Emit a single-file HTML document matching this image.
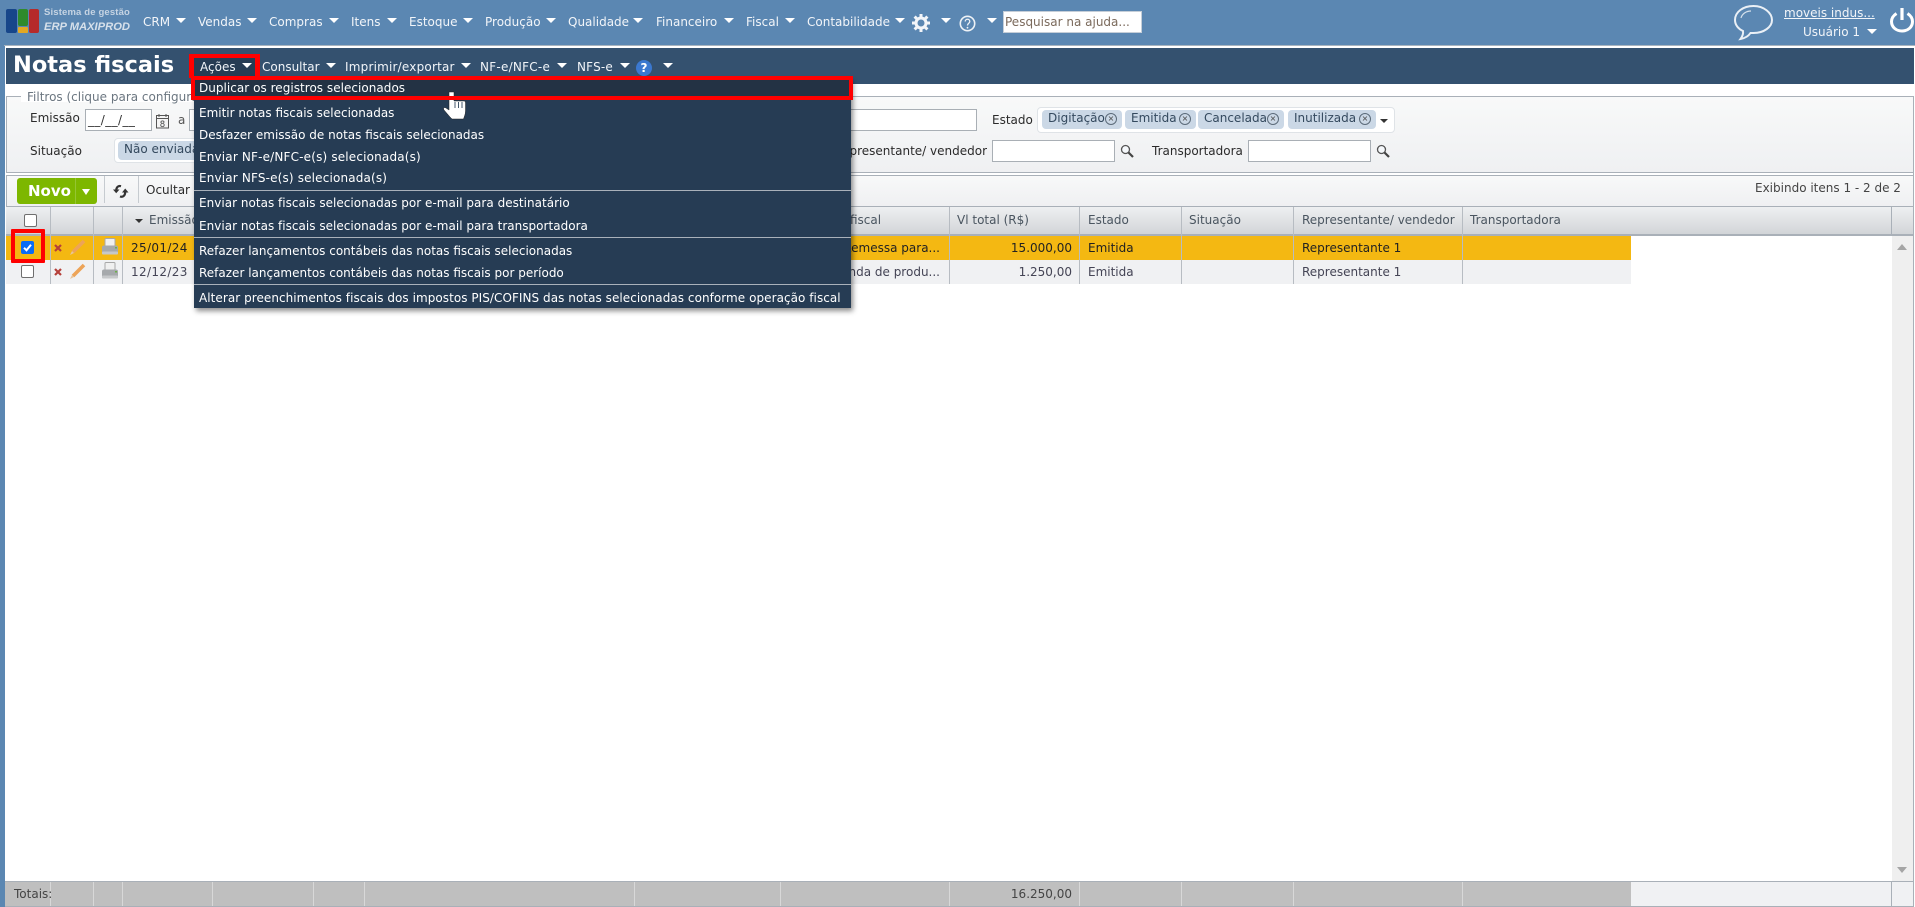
<!DOCTYPE html>
<html lang="pt"><head><meta charset="utf-8"><title>Notas fiscais</title>
<style>
html,body{margin:0;padding:0;width:1915px;height:907px;overflow:hidden;background:#fff}
body{position:relative;font:12px/16px "DejaVu Sans",sans-serif;color:#2b2b2b}
.a,.t,.v,.ar,.dk{position:absolute}
.t{white-space:nowrap;line-height:16px}
.n{color:#f2f5f9}
.ar{width:0;height:0;border-left:5px solid transparent;border-right:5px solid transparent;border-top:5px solid #fff;margin-left:-5px}
.m{color:#fff;left:199px}
.sep{position:absolute;left:194px;width:657px;height:1px;background:#a9b1ba}
.v{width:1px;background:#a9b0b8}
.tag{position:absolute;height:19px;background:#cbd8e6;border-radius:4px;top:110px;line-height:17px;color:#34495e;padding-left:6px;box-sizing:border-box;white-space:nowrap}
.x{position:absolute;top:3px;right:5px;width:12px;height:12px;box-sizing:border-box;border:1px solid #5c6b7a;border-radius:50%;font-size:8px;line-height:10px;text-align:center;color:#444}
.in{position:absolute;background:#fff;border:1px solid #a9afb5;box-sizing:border-box}
.h{color:#4a5560}
.f{position:absolute;top:882px;height:24px;width:1px;background:#d8d8d8}
</style></head><body>
<!-- header -->
<div class="a" style="left:0;top:0;width:1915px;height:907px;background:#5b87b2"></div>
<div class="a" style="left:4px;top:45px;width:1911px;height:1px;background:#a8b4bf"></div>
<div class="a" style="left:5px;top:46px;width:1910px;height:861px;background:#fff"></div>
<!-- logo -->
<div class="a" style="left:6px;top:9px;width:11px;height:24px;background:#17468a;border-radius:2px"></div>
<div class="a" style="left:18px;top:9px;width:10px;height:17px;background:#2f8a2c;border-radius:2px"></div>
<div class="a" style="left:18px;top:27px;width:10px;height:6px;background:#e3a823;border-radius:1px"></div>
<div class="a" style="left:29px;top:9px;width:10px;height:24px;background:#b52a2a;border-radius:2px"></div>
<div class="t" style="left:44px;top:5px;font-size:9.5px;font-weight:bold;color:#c6d4e3;font-family:'Liberation Sans',sans-serif;letter-spacing:.15px">Sistema de gestão</div>
<div class="t" style="left:44px;top:19px;font-size:11.2px;font-weight:bold;font-style:italic;color:#d6e0ea;font-family:'Liberation Sans',sans-serif">ERP MAXIPROD</div>
<!-- nav -->
<div class="t n" style="left:143px;top:14px">CRM</div><div class="ar" style="left:181px;top:18px"></div>
<div class="t n" style="left:198px;top:14px">Vendas</div><div class="ar" style="left:252px;top:18px"></div>
<div class="t n" style="left:269px;top:14px">Compras</div><div class="ar" style="left:334px;top:18px"></div>
<div class="t n" style="left:351px;top:14px">Itens</div><div class="ar" style="left:392px;top:18px"></div>
<div class="t n" style="left:409px;top:14px">Estoque</div><div class="ar" style="left:468px;top:18px"></div>
<div class="t n" style="left:485px;top:14px">Produção</div><div class="ar" style="left:551px;top:18px"></div>
<div class="t n" style="left:568px;top:14px">Qualidade</div><div class="ar" style="left:638px;top:18px"></div>
<div class="t n" style="left:656px;top:14px">Financeiro</div><div class="ar" style="left:729px;top:18px"></div>
<div class="t n" style="left:746px;top:14px">Fiscal</div><div class="ar" style="left:790px;top:18px"></div>
<div class="t n" style="left:807px;top:14px">Contabilidade</div><div class="ar" style="left:900px;top:18px"></div>
<svg class="a" style="left:912px;top:14px" width="18" height="18" viewBox="0 0 18 18"><circle cx="9" cy="9" r="5" fill="none" stroke="#f2f5f9" stroke-width="3"/><path d="M9 0v4M9 14v4M0 9h4M14 9h4M2.600 2.600l3 3M12.400 12.400l3 3M15.400 2.600l-3 3M5.600 12.400l-3 3" stroke="#f2f5f9" stroke-width="3"/></svg>
<div class="ar" style="left:946px;top:18px"></div>
<svg class="a" style="left:959px;top:15px" width="17" height="17" viewBox="0 0 17 17"><circle cx="8.500" cy="8.500" r="7.200" fill="none" stroke="#eef2f6" stroke-width="1.600"/><path d="M6.200 6.500c0-3 4.600-3 4.600 0 0 1.800-2.300 1.800-2.300 4" fill="none" stroke="#eef2f6" stroke-width="1.300"/><circle cx="8.500" cy="12.700" r=".9" fill="#eef2f6"/></svg>
<div class="ar" style="left:992px;top:18px"></div>
<div class="in" style="left:1003px;top:11px;width:139px;height:22px;border-color:#c5ced8"></div>
<div class="t" style="left:1005px;top:14px;color:#7b6a5c">Pesquisar na ajuda...</div>
<svg class="a" style="left:1733px;top:4px" width="41" height="38" viewBox="0 0 41 38"><path d="M20.500 2C10 2 2 8 2 16c0 5 3.500 9 8 11 .5 3-1 6-2.500 8 4-.7 8-3 10-6h3c10.500 0 18.500-6 18.500-13S31 2 20.500 2z" fill="none" stroke="#eaf0f6" stroke-width="2"/><path d="M8 14c1-4 5-7 10-7" fill="none" stroke="#d5e1ec" stroke-width="1.200"/></svg>
<div class="t n" style="left:1784px;top:5px;text-decoration:underline">moveis indus...</div>
<div class="t n" style="left:1803px;top:24px">Usuário 1</div><div class="ar" style="left:1872px;top:29px"></div>
<svg class="a" style="left:1889px;top:6px" width="26" height="28" viewBox="0 0 26 28"><path d="M7.500 7.500C4.500 9.500 2.500 12 2.500 15.500 2.500 21 7 25 13 25s10.500-4 10.500-9.500c0-3.500-2-6-5-8" fill="none" stroke="#fff" stroke-width="3"/><path d="M13 2v12" stroke="#fff" stroke-width="3.200"/></svg>
<!-- title bar -->
<div class="a" style="left:6px;top:48px;width:1908px;height:36px;background:#34516f"></div>
<div class="t" style="left:13px;top:51px;font-size:22.5px;line-height:28px;font-weight:bold;color:#fff">Notas fiscais</div>
<div class="a" style="left:189px;top:54px;width:71px;height:24px;background:#ff0000"></div>
<div class="a" style="left:194px;top:58px;width:61px;height:18px;background:#263c54"></div>
<div class="t n" style="left:200px;top:59px">Ações</div><div class="ar" style="left:247px;top:63px"></div>
<div class="t n" style="left:262px;top:59px">Consultar</div><div class="ar" style="left:331px;top:63px"></div>
<div class="t n" style="left:345px;top:59px;letter-spacing:.2px">Imprimir/exportar</div><div class="ar" style="left:466px;top:63px"></div>
<div class="t n" style="left:480px;top:59px;letter-spacing:.25px">NF-e/NFC-e</div><div class="ar" style="left:562px;top:63px"></div>
<div class="t n" style="left:577px;top:59px;letter-spacing:.2px">NFS-e</div><div class="ar" style="left:625px;top:63px"></div>
<div class="a" style="left:636px;top:60px;width:16px;height:16px;border-radius:50%;background:#3b78cf;color:#fff;font-weight:bold;text-align:center;line-height:16px">?</div>
<div class="ar" style="left:668px;top:63px"></div>
<!-- filter panel -->
<div class="a" style="left:6px;top:96px;width:1908px;height:77px;box-sizing:border-box;border:1px solid #a9b0b8;background:linear-gradient(#f8f9f9,#eff0f2)"></div>
<div class="a" style="left:21px;top:90px;width:190px;height:12px;background:#fff"></div>
<div class="t" style="left:27px;top:89px;color:#6b7680">Filtros (clique para configurar)</div>
<div class="t" style="left:30px;top:110px">Emissão</div>
<div class="in" style="left:85px;top:109px;width:67px;height:22px"></div>
<div class="t" style="left:88px;top:112px;color:#333;letter-spacing:.4px">__/__/__</div>
<svg class="a" style="left:155px;top:113px" width="15" height="16" viewBox="0 0 15 16"><rect x="1.500" y="2.500" width="12" height="12.500" fill="#f4f4f4" stroke="#555"/><path d="M1.500 5.500h12M4 1v3M11 1v3" stroke="#555"/><text x="7.500" y="14" font-size="8.500" text-anchor="middle" fill="#444" font-family="DejaVu Sans,sans-serif">8</text></svg>
<div class="t" style="left:178px;top:112px;color:#555">a</div>
<div class="in" style="left:189px;top:109px;width:20px;height:22px"></div>
<div class="t" style="left:30px;top:143px">Situação</div>
<div class="a" style="left:114px;top:138px;width:90px;height:25px;background:#fff;border:1px solid #dfe3e7;border-radius:4px;box-sizing:border-box"></div>
<div class="a" style="left:118px;top:141px;width:80px;height:19px;background:#cbd8e6;border-radius:4px"></div>
<div class="t" style="left:124px;top:141px;color:#34495e">Não enviada</div>
<div class="in" style="left:840px;top:109px;width:137px;height:22px"></div>
<div class="t" style="left:992px;top:112px">Estado</div>
<div class="a" style="left:1037px;top:107px;width:358px;height:26px;background:#fff;border:1px solid #dfe3e7;border-radius:4px;box-sizing:border-box"></div>
<div class="tag" style="left:1042px;width:80px">Digitação<span class="x">×</span></div>
<div class="tag" style="left:1125px;width:71px">Emitida<span class="x">×</span></div>
<div class="tag" style="left:1198px;width:86px">Cancelada<span class="x">×</span></div>
<div class="tag" style="left:1288px;width:88px">Inutilizada<span class="x">×</span></div>
<div class="ar" style="left:1384px;top:119px;border-left-width:4px;border-right-width:4px;border-top:4px solid #333;margin-left:-4px"></div>
<div class="t" style="left:851px;top:143px;width:136px;overflow:hidden;direction:rtl;text-align:right">Representante/ vendedor</div>
<div class="in" style="left:992px;top:140px;width:123px;height:22px"></div>
<svg class="a" style="left:1120px;top:144px" width="14" height="14" viewBox="0 0 14 14"><circle cx="5.500" cy="5.500" r="4" fill="#f5f8fb" stroke="#555" stroke-width="1.300"/><path d="M8.500 8.500l4.500 4.500" stroke="#444" stroke-width="2.200"/></svg>
<div class="t" style="left:1152px;top:143px">Transportadora</div>
<div class="in" style="left:1248px;top:140px;width:123px;height:22px"></div>
<svg class="a" style="left:1376px;top:144px" width="14" height="14" viewBox="0 0 14 14"><circle cx="5.500" cy="5.500" r="4" fill="#f5f8fb" stroke="#555" stroke-width="1.300"/><path d="M8.500 8.500l4.500 4.500" stroke="#444" stroke-width="2.200"/></svg>
<!-- toolbar -->
<div class="a" style="left:6px;top:175px;width:1908px;height:32px;box-sizing:border-box;border:1px solid #a9b0b8;background:linear-gradient(#f8f9f9,#eff0f2)"></div>
<div class="a" style="left:17px;top:178px;width:80px;height:26px;background:#7db700;border-radius:3px"></div>
<div class="a" style="left:75px;top:178px;width:1px;height:26px;background:#94c533"></div>
<div class="t" style="left:28px;top:183px;font-size:15px;font-weight:bold;color:#fff">Novo</div>
<div class="ar" style="left:86px;top:189px;border-left-width:4px;border-right-width:4px;border-top-width:6px;margin-left:-4px"></div>
<div class="a" style="left:104px;top:176px;width:1px;height:27px;background:#c6cbd0"></div>
<div class="a" style="left:138px;top:176px;width:1px;height:27px;background:#c6cbd0"></div>
<svg class="a" style="left:113px;top:184px" width="16" height="15" viewBox="0 0 16 15"><path d="M8 2.200C5 1.300 3 3.500 3.300 7" fill="none" stroke="#333" stroke-width="2.200"/><path d="M0 5.500l3.200 3.700L6.500 5.500z" fill="#333"/><path d="M7 12.500c3 1 5.200-1 5.200-4.500" fill="none" stroke="#333" stroke-width="2.200"/><path d="M9 8.500l3.200-4 3.300 4z" fill="#333"/></svg>
<div class="t" style="left:146px;top:182px">Ocultar</div>
<div class="t" style="left:1755px;top:180px;color:#444">Exibindo itens 1 - 2 de 2</div>
<!-- grid header -->
<div class="a" style="left:6px;top:206px;width:1908px;height:30px;box-sizing:border-box;border-top:1px solid #a9b0b8;border-bottom:2px solid #a9b0b8;background:linear-gradient(#eef0f1,#d2d5d8)"></div>
<div class="a" style="left:24px;top:214px;width:13px;height:13px;background:#fff;border:1px solid #6f6f6f;border-radius:2px;box-sizing:border-box"></div>
<div class="ar" style="left:139px;top:219px;border-left-width:4px;border-right-width:4px;border-top:4px solid #333;margin-left:-4px"></div>
<div class="t h" style="left:149px;top:212px">Emissão</div>
<div class="t h" style="left:850px;top:212px">fiscal</div>
<div class="t h" style="left:957px;top:212px">Vl total (R$)</div>
<div class="t h" style="left:1088px;top:212px">Estado</div>
<div class="t h" style="left:1189px;top:212px">Situação</div>
<div class="t h" style="left:1302px;top:212px">Representante/ vendedor</div>
<div class="t h" style="left:1470px;top:212px">Transportadora</div>
<!-- rows -->
<div class="a" style="left:6px;top:236px;width:1625px;height:24px;background:#f4b812"></div>
<div class="a" style="left:6px;top:260px;width:1625px;height:24px;background:#f0f1f3"></div>
<!-- grid lines -->
<div class="v" style="left:50px;top:207px;height:77px;background:#b7bcc2"></div>
<div class="v" style="left:93px;top:207px;height:77px;background:#b7bcc2"></div>
<div class="v" style="left:122px;top:207px;height:77px;background:#b7bcc2"></div>
<div class="v" style="left:949px;top:207px;height:77px;background:#b7bcc2"></div>
<div class="v" style="left:1079px;top:207px;height:77px;background:#b7bcc2"></div>
<div class="v" style="left:1181px;top:207px;height:77px;background:#b7bcc2"></div>
<div class="v" style="left:1293px;top:207px;height:77px;background:#b7bcc2"></div>
<div class="v" style="left:1462px;top:207px;height:77px;background:#b7bcc2"></div>
<div class="v" style="left:1891px;top:207px;height:29px"></div>
<!-- row content -->
<div class="a" style="left:21px;top:241px;width:13px;height:13px;background:#0a6cf5;border-radius:2px"></div>
<svg class="a" style="left:21px;top:241px" width="13" height="13" viewBox="0 0 13 13"><path d="M3 6.800l2.500 2.500L10 3.700" fill="none" stroke="#fff" stroke-width="2"/></svg>
<div class="a" style="left:21px;top:265px;width:13px;height:13px;background:#fff;border:1px solid #6f6f6f;border-radius:2px;box-sizing:border-box"></div>
<div class="a" style="left:11px;top:229px;width:34px;height:34px;box-sizing:border-box;border:4px solid #f00;border-radius:1px"></div>
<svg class="a" style="left:54px;top:244px" width="8" height="8" viewBox="0 0 8 8"><path d="M1 1l6 6M7 1L1 7" stroke="#b5403a" stroke-width="2.200"/></svg>
<svg class="a" style="left:54px;top:268px" width="8" height="8" viewBox="0 0 8 8"><path d="M1 1l6 6M7 1L1 7" stroke="#b5403a" stroke-width="2.200"/></svg>
<svg class="a" style="left:69px;top:239px" width="17" height="17" viewBox="0 0 17 17"><path d="M15 2L4 13" stroke="#eda458" stroke-width="3.600"/><path d="M3 12L1 16l4-2z" fill="#e8c49a"/></svg>
<svg class="a" style="left:69px;top:263px" width="17" height="17" viewBox="0 0 17 17"><path d="M15 2L4 13" stroke="#eda458" stroke-width="3.600"/><path d="M3 12L1 16l4-2z" fill="#e8c49a"/></svg>
<svg class="a" style="left:101px;top:238px" width="18" height="18" viewBox="0 0 18 18"><rect x="4" y="0.500" width="10" height="8" rx="1" fill="#f0f0f0" stroke="#a8a8a8"/><rect x="1" y="7.500" width="16" height="9" rx="2" fill="#a6a9ac"/><rect x="1" y="13.500" width="16" height="3" rx="1" fill="#c6c8ca"/><rect x="14" y="9" width="2" height="1.500" fill="#6db04a"/></svg>
<svg class="a" style="left:101px;top:262px" width="18" height="18" viewBox="0 0 18 18"><rect x="4" y="0.500" width="10" height="8" rx="1" fill="#f0f0f0" stroke="#a8a8a8"/><rect x="1" y="7.500" width="16" height="9" rx="2" fill="#a6a9ac"/><rect x="1" y="13.500" width="16" height="3" rx="1" fill="#c6c8ca"/><rect x="14" y="9" width="2" height="1.500" fill="#6db04a"/></svg>
<div class="t" style="left:131px;top:240px;color:#222;letter-spacing:.35px">25/01/24</div>
<div class="t" style="left:131px;top:264px;color:#445;letter-spacing:.35px">12/12/23</div>
<div class="t" style="left:760px;top:240px;width:180px;text-align:right;color:#222">Remessa para...</div>
<div class="t" style="left:760px;top:264px;width:180px;text-align:right;color:#445">Venda de produ...</div>
<div class="t" style="left:950px;top:240px;width:122px;text-align:right;color:#222">15.000,00</div>
<div class="t" style="left:950px;top:264px;width:122px;text-align:right;color:#445">1.250,00</div>
<div class="t" style="left:1088px;top:240px;color:#222">Emitida</div>
<div class="t" style="left:1088px;top:264px;color:#445">Emitida</div>
<div class="t" style="left:1302px;top:240px;color:#222">Representante 1</div>
<div class="t" style="left:1302px;top:264px;color:#445">Representante 1</div>
<!-- scrollbar -->
<div class="a" style="left:1892px;top:236px;width:21px;height:646px;background:#efefef"></div>
<div class="ar" style="left:1902px;top:244px;border-left-width:5px;border-right-width:5px;border-top:0;border-bottom:6px solid #a5a5a5"></div>
<div class="ar" style="left:1902px;top:867px;border-left-width:5px;border-right-width:5px;border-top:6px solid #a5a5a5"></div>
<div class="a" style="left:1913px;top:96px;width:1px;height:811px;background:#a9b0b8"></div>
<!-- footer -->
<div class="a" style="left:5px;top:881px;width:1909px;height:1px;background:#a9b0b8"></div>
<div class="a" style="left:5px;top:882px;width:1626px;height:24px;background:#bfbfbf"></div>
<div class="a" style="left:1631px;top:882px;width:282px;height:24px;background:#f0f1f3"></div>
<div class="a" style="left:5px;top:906px;width:1909px;height:1px;background:#a9b0b8"></div>
<div class="a" style="left:1891px;top:882px;width:1px;height:24px;background:#a9b0b8"></div>
<div class="f" style="left:50px"></div><div class="f" style="left:93px"></div><div class="f" style="left:122px"></div><div class="f" style="left:212px"></div><div class="f" style="left:313px"></div><div class="f" style="left:364px"></div><div class="f" style="left:634px"></div><div class="f" style="left:780px"></div><div class="f" style="left:949px"></div><div class="f" style="left:1079px"></div><div class="f" style="left:1181px"></div><div class="f" style="left:1293px"></div><div class="f" style="left:1462px"></div>
<div class="t" style="left:14px;top:886px;color:#444">Totais:</div>
<div class="t" style="left:950px;top:886px;width:122px;text-align:right;color:#444">16.250,00</div>
<!-- dropdown menu -->
<div class="a" style="left:194px;top:78px;width:657px;height:230px;background:#263c54;box-shadow:2px 3px 5px rgba(0,0,0,.45)"></div>
<div class="a" style="left:194px;top:78px;width:657px;height:21px;background:#233244"></div>
<!-- hand cursor (beneath the red annotation) -->
<svg class="a" style="left:443px;top:91px" width="24" height="30" viewBox="0 0 24 30"><path d="M6 1h5v9h10c1 0 1.500 1 1.500 2v8c0 3-1 5-2 8H9L7 26 1 19c-1-2 0-3 2-2l3 2z" fill="#fff" stroke="#222" stroke-width=".5"/><path d="M12 11v6M15.500 11v6M19 11v6" stroke="#44586c" stroke-width="1"/></svg>
<div class="a" style="left:191px;top:76px;width:662px;height:24px;box-sizing:border-box;border:4px solid #f00"></div>
<div class="t m" style="top:80px;letter-spacing:.03px">Duplicar os registros selecionados</div>
<div class="t m" style="top:105px">Emitir notas fiscais selecionadas</div>
<div class="t m" style="top:127px">Desfazer emissão de notas fiscais selecionadas</div>
<div class="t m" style="top:149px;letter-spacing:.17px">Enviar NF-e/NFC-e(s) selecionada(s)</div>
<div class="t m" style="top:170px;letter-spacing:.16px">Enviar NFS-e(s) selecionada(s)</div>
<div class="sep" style="top:190px"></div>
<div class="t m" style="top:195px;letter-spacing:.02px">Enviar notas fiscais selecionadas por e-mail para destinatário</div>
<div class="t m" style="top:218px;letter-spacing:.02px">Enviar notas fiscais selecionadas por e-mail para transportadora</div>
<div class="sep" style="top:237px"></div>
<div class="t m" style="top:243px">Refazer lançamentos contábeis das notas fiscais selecionadas</div>
<div class="t m" style="top:265px">Refazer lançamentos contábeis das notas fiscais por período</div>
<div class="sep" style="top:284px"></div>
<div class="t m" style="top:290px;letter-spacing:.05px">Alterar preenchimentos fiscais dos impostos PIS/COFINS das notas selecionadas conforme operação fiscal</div>
</body></html>
